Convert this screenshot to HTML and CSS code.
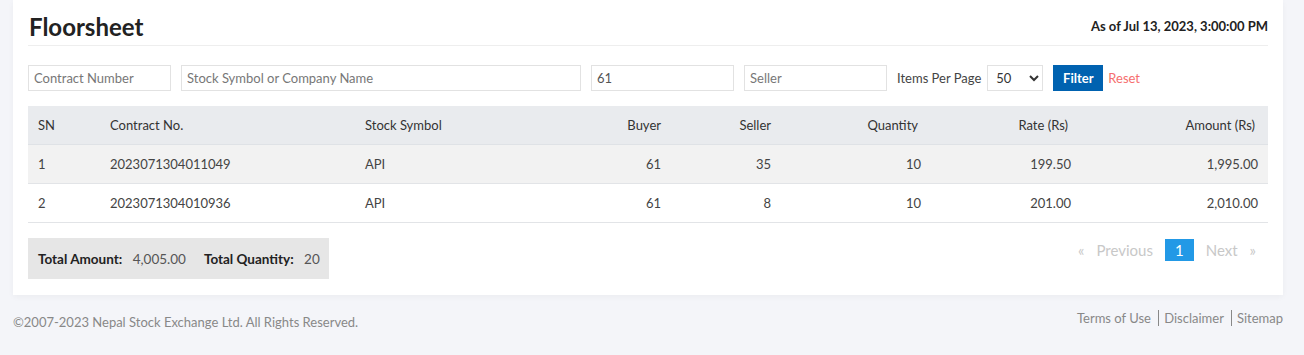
FILE: index.html
```
<!DOCTYPE html>
<html lang="en">
<head>
    <meta charset="UTF-8">
    <title>Floorsheet</title>
    <link rel="stylesheet" href="styles.css">
</head>
<body>

    <div class="card">
        <div class="card-head">
            <h1>Floorsheet</h1>
            <span class="as-of">As of Jul 13, 2023, 3:00:00 PM</span>
        </div>

        <form class="filters">
            <input type="text" class="f-contract" placeholder="Contract Number">
            <input type="text" class="f-symbol" placeholder="Stock Symbol or Company Name">
            <input type="text" class="f-buyer" value="61">
            <input type="text" class="f-seller" placeholder="Seller">
            <label class="per-page">Items Per Page
                <select>
                    <option>50</option>
                </select>
            </label>
            <button type="button" class="btn-filter">Filter</button>
            <a href="#" class="reset">Reset</a>
        </form>

        <table class="sheet">
            <thead>
                <tr>
                    <th class="c-sn">SN</th>
                    <th class="c-contract">Contract No.</th>
                    <th class="c-symbol">Stock Symbol</th>
                    <th class="num c-buyer">Buyer</th>
                    <th class="num c-seller">Seller</th>
                    <th class="num c-qty">Quantity</th>
                    <th class="num c-rate">Rate (Rs)</th>
                    <th class="num c-amount">Amount (Rs)</th>
                </tr>
            </thead>
            <tbody>
                <tr>
                    <td>1</td>
                    <td>2023071304011049</td>
                    <td>API</td>
                    <td class="num">61</td>
                    <td class="num">35</td>
                    <td class="num">10</td>
                    <td class="num">199.50</td>
                    <td class="num">1,995.00</td>
                </tr>
                <tr>
                    <td>2</td>
                    <td>2023071304010936</td>
                    <td>API</td>
                    <td class="num">61</td>
                    <td class="num">8</td>
                    <td class="num">10</td>
                    <td class="num">201.00</td>
                    <td class="num">2,010.00</td>
                </tr>
            </tbody>
        </table>

        <div class="sheet-foot">
            <div class="totals">
                <span><b>Total Amount:</b> 4,005.00</span>
                <span><b>Total Quantity:</b> 20</span>
            </div>
            <ul class="pager">
                <li class="off">&laquo;</li>
                <li class="off">Previous</li>
                <li class="current">1</li>
                <li class="off">Next</li>
                <li class="off">&raquo;</li>
            </ul>
        </div>
    </div>

    <footer class="site-foot">
        <p>&copy;2007-2023 Nepal Stock Exchange Ltd. All Rights Reserved.</p>
        <nav>
            <a href="#">Terms of Use</a>
            <a href="#">Disclaimer</a>
            <a href="#">Sitemap</a>
        </nav>
    </footer>

</body>
</html>
```

FILE: styles.css
```
body {
    margin: 0;
    font-family: Lato, "Noto Sans", sans-serif;
    font-size: 13px;
    color: #333;
    background-color: #f4f5f9;
}
.card {
    margin: 0 21px 0 13px;
    padding: 0 15px 16px;
    background-color: #fff;
    box-shadow: 0 2px 6px rgba(0, 0, 0, 0.04);
}
.card-head {
    display: flex;
    justify-content: space-between;
    align-items: flex-end;
    height: 45px;
    border-bottom: 1px solid #eee;
}
.card-head h1 {
    margin: 0 0 4px 1px;
    font-size: 24px;
    font-weight: bold;
    color: #222;
}
.as-of {
    margin-bottom: 11px;
    font-size: 13px;
    font-weight: bold;
    color: #222;
}
.filters {
    display: flex;
    align-items: center;
    margin-top: 19px;
}
.filters input {
    box-sizing: border-box;
    height: 26px;
    padding: 0 5px;
    border: 1px solid #e2e2e2;
    font-family: inherit;
    font-size: 13px;
    color: #555;
    margin-right: 10px;
}
.filters input::placeholder {
    color: #777;
}
.f-contract { width: 143px; }
.f-symbol { width: 400px; }
.f-buyer { width: 143px; }
.f-seller { width: 143px; }
.per-page {
    color: #444;
    display: flex;
    align-items: center;
    gap: 6px;
}
.per-page select {
    box-sizing: border-box;
    width: 56px;
    height: 26px;
    border: 1px solid #e2e2e2;
    background: #fff;
    font-family: inherit;
    font-size: 13px;
    color: #333;
    padding-left: 4px;
}
.btn-filter {
    margin-left: 10px;
    height: 26px;
    width: 50px;
    border: none;
    background-color: #0062b0;
    color: #fff;
    font-family: inherit;
    font-size: 13px;
    font-weight: bold;
}
.reset {
    margin-left: 5px;
    color: #f66e6e;
    text-decoration: none;
}
.sheet {
    width: 100%;
    margin-top: 15px;
    border-collapse: collapse;
    table-layout: fixed;
}
.sheet th {
    height: 38px;
    padding: 0 10px;
    background-color: #e9ebee;
    font-weight: normal;
    text-align: left;
    color: #333;
    border-bottom: 1px solid #dfe2e6;
}
.sheet td {
    height: 38px;
    padding: 0 10px;
    color: #444;
    border-bottom: 1px solid #e2e4e7;
}
.sheet tbody tr:nth-child(odd) td {
    background-color: #f2f2f2;
}
.sheet .num {
    text-align: right;
}
.sheet th.num {
    padding-right: 13px;
}
.sheet th.c-buyer,
.sheet th.c-seller {
    padding-right: 10px;
}
/* widths are content widths, cell padding comes on top */
.c-sn { width: 52px; }
.c-contract { width: 235px; }
.c-symbol { width: 185px; }
.c-buyer { width: 91px; }
.c-seller { width: 90px; }
.c-qty { width: 127px; }
.c-rate { width: 127px; }
.c-amount { width: 164px; }
.sheet-foot {
    display: flex;
    justify-content: space-between;
    align-items: flex-start;
    margin-top: 15px;
}
.totals {
    display: flex;
    gap: 18px;
    padding: 0 9px 0 10px;
    height: 41px;
    align-items: center;
    background-color: #e6e6e6;
    font-size: 13.5px;
    color: #555;
}
.totals b {
    color: #222;
    margin-right: 7px;
}
.pager {
    display: flex;
    align-items: center;
    list-style: none;
    margin: 1px 6px 0 0;
    padding: 0;
    font-size: 15px;
}
.pager li {
    padding: 0 6px;
    height: 22px;
    line-height: 22px;
}
.pager .off {
    color: #c8c8c8;
}
.pager .current {
    background-color: #2299e6;
    color: #fff;
    padding: 0 10px;
    margin: 0 6px;
}
.site-foot {
    display: flex;
    justify-content: space-between;
    margin: 0 21px 0 13px;
    color: #888;
}
.site-foot p {
    margin: 19px 0 0;
}
.site-foot nav {
    margin-top: 15px;
}
.site-foot a {
    color: #888;
    text-decoration: none;
}
.site-foot a + a {
    border-left: 1px solid #888;
    padding-left: 5px;
    margin-left: 4px;
}
```
